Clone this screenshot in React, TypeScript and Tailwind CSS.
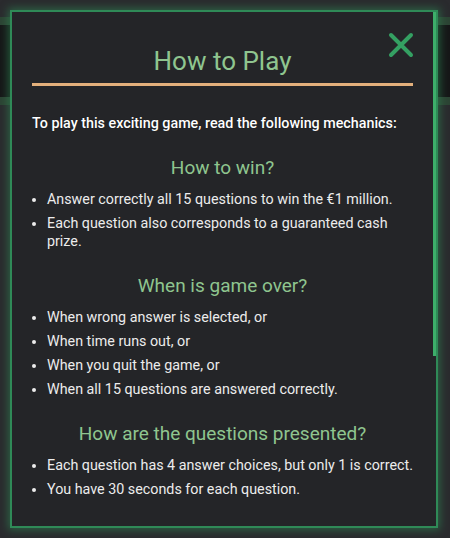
import React from 'react';

const sections = [
  {
    title: 'How to win?',
    items: [
      'Answer correctly all 15 questions to win the €1 million.',
      'Each question also corresponds to a guaranteed cash prize.',
    ],
  },
  {
    title: 'When is game over?',
    items: [
      'When wrong answer is selected, or',
      'When time runs out, or',
      'When you quit the game, or',
      'When all 15 questions are answered correctly.',
    ],
  },
  {
    title: 'How are the questions presented?',
    items: [
      'Each question has 4 answer choices, but only 1 is correct.',
      'You have 30 seconds for each question.',
    ],
  },
];

const CloseIcon: React.FC = () => (
  <svg width="26" height="26" viewBox="0 0 26 26" fill="none">
    <path d="M3 3L23 23M23 3L3 23" stroke="#34a062" strokeWidth="4" strokeLinecap="round" />
  </svg>
);

const App: React.FC = () => {
  return (
    <div
      className="relative w-[450px] h-[538px] overflow-hidden bg-[#2a2b2e]"
      style={{ fontFamily: 'Roboto, "Noto Sans", sans-serif' }}
    >
      {/* dimmed header behind the modal */}
      <div className="mt-[17px] h-[88px] border-y-[8px] border-[#2c4434] bg-[#161718]" />

      <div className="absolute left-[10px] top-[10px] w-[428px] h-[518px] flex border-2 border-[#2f8a57] bg-[#242528] shadow-[0_0_8px_2px_rgba(46,140,85,0.55)]">
        <div className="relative flex-1 px-[20px] pt-[33px]">
          <button className="absolute right-[19px] top-[20px]" aria-label="Close">
            <CloseIcon />
          </button>
          <h2 className="pb-[6px] border-b-[3px] border-[#e3b07c] text-center text-[26px] leading-[32px] text-[#8fc58f]">
            How to Play
          </h2>
          <p className="mt-[28px] text-[14.3px] leading-[18px] font-medium text-white [text-shadow:0_0_1px_rgba(0,0,0,0.6)]">
            To play this exciting game, read the following mechanics:
          </p>
          {sections.map((s) => (
            <div key={s.title} className="mt-[24px]">
              <h3 className="text-center text-[19px] leading-[24px] text-[#8fc58f]">{s.title}</h3>
              <ul className="mt-[10px] pl-[15px] flex flex-col gap-[6px]">
                {s.items.map((it) => (
                  <li key={it} className="list-disc text-[14.3px] leading-[18px] text-[#ececec]">
                    {it}
                  </li>
                ))}
              </ul>
            </div>
          ))}
        </div>
        {/* scrollbar */}
        <div className="w-[3px] flex flex-col">
          <div className="h-[344px] bg-[#3dae6a]" />
        </div>
      </div>
    </div>
  );
};

export default App;
